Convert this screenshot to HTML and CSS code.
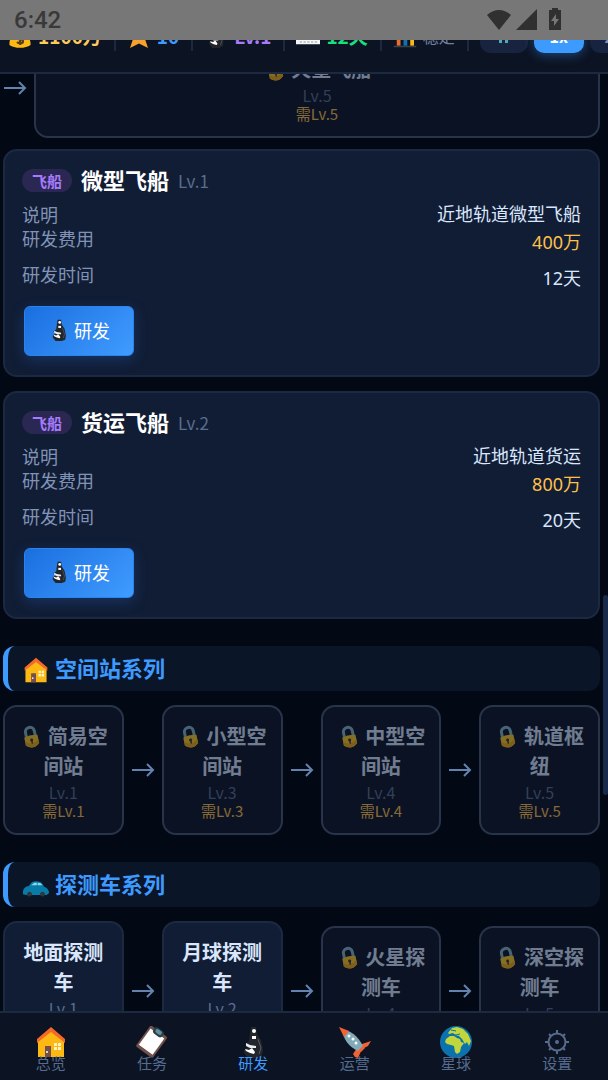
FILE: index.html
```html
<!DOCTYPE html>
<html lang="zh-CN">
<head>
    <meta charset="UTF-8">
    <meta name="viewport" content="width=device-width, initial-scale=1.0">
    <title>研发</title>
    <link rel="stylesheet" href="styles.css">
</head>
<body>
    <!-- Shared icons -->
    <svg class="sprite" aria-hidden="true">
        <symbol id="i-home" viewBox="0 0 32 32">
            <path d="M3 13 16 3l13 10v18H3z" fill="#fdb913"/>
            <path d="M16 1 2 13v4L16 6l14 11v-4z" fill="#f4692a"/>
            <path d="M10 20h6v11h-6z" fill="#75504a"/>
            <circle cx="12" cy="26" r="1" fill="#fff"/>
            <path d="M19 17h3v3h-3zM23 17h3v3h-3zM19 21h3v3h-3zM23 21h3v3h-3z" fill="#fff3c4"/>
        </symbol>
        <symbol id="i-clipboard" viewBox="0 0 32 32">
            <g transform="rotate(36 16 16)">
                <rect x="5" y="3" width="21" height="26" rx="2" fill="#70504b"/>
                <path d="M7 6h17v20H7z" fill="#fff"/>
                <rect x="10" y="1" width="11" height="7" rx="3" fill="#26414c"/>
                <rect x="12" y="2" width="7" height="4" rx="2" fill="#668f9d"/>
            </g>
        </symbol>
        <symbol id="i-scope" viewBox="0 0 32 32">
            <path d="M14 1h5l1 7 4 6 2 10-1 6-5 2h-9l-4-5v-3l4-3-3-3 4-3 1-8z" fill="#22262b"/>
            <circle cx="17" cy="5" r="2" fill="#fff"/>
            <path d="M15 10h4v3h-4z" fill="#fff"/>
            <path d="m9 17 4 2 6 1v2l-6 0-4-2z" fill="#e9edef"/>
            <path d="m8 23 4 1 3-2 3 4-1 2-4-1-4-2z" fill="#fff"/>
            <path d="m21 13 3 9-2 6" fill="none" stroke="#555c63" stroke-width="1"/>
        </symbol>
        <symbol id="i-rocket" viewBox="0 0 32 32">
            <path d="m18 22 5-4 9-3-3 5-6 3-4 9-3-1-2-3z" fill="#f16335"/>
            <path d="M4 4c7 0 15 6 20 16l-5 5C10 21 3 12 4 4z" fill="#82aab9"/>
            <path d="m0 1 10 4-5 6z" fill="#f16335"/>
            <path d="m19 25 5-5 2 2-4 4z" fill="#f16335"/>
            <circle cx="10" cy="10" r="1.500" fill="#fff"/>
            <circle cx="14" cy="13" r="1.500" fill="#fff"/>
            <circle cx="17" cy="17" r="1.500" fill="#fff"/>
        </symbol>
        <symbol id="i-globe" viewBox="0 0 32 32">
            <circle cx="16" cy="16" r="16" fill="#0b72ad"/>
            <path d="M6 13l4-3 4 0 3 2 3 1 1 3 3 1-3 4-1 5-3 2-2-2-1-6-3-1-4-1-2-2z" fill="#c2d63c"/>
            <path d="M8 7l4-5 5-1 6 2 5 5 3 7-2 5-2-4-2 2-3-5-3-3-4-1-2-2-4 1z" fill="#c2d63c"/>
            <path d="m12 8 4 1 4-1M11 4l5 1" stroke="#0b72ad" fill="none"/>
        </symbol>
        <symbol id="i-gear" viewBox="0 0 32 32">
            <circle cx="16" cy="16" r="8.500" fill="none" stroke="currentColor" stroke-width="2"/>
            <circle cx="16" cy="16" r="2" fill="currentColor"/>
            <path d="M16 4v3M16 25v3M4 16h3M25 16h3M8 8l2 2M22 22l2 2M24 8l-2 2M8 24l2-2" stroke="currentColor" stroke-width="2"/>
        </symbol>
        <symbol id="i-lock" viewBox="0 0 32 32">
            <g transform="rotate(-12 16 16)">
                <path d="M10 17V9a6 6 0 0 1 12 0v7" fill="none" stroke="#84b4c4" stroke-width="4"/>
                <path d="M7 15q9-3 18 0v11q-9 8-18 0z" fill="#ffcc22"/>
                <path d="M7 21q9 7 18 0v5q-9 8-18 0z" fill="#f0ac14"/>
                <circle cx="16" cy="20" r="2" fill="#473329"/>
                <path d="M15 20h2v5h-2z" fill="#473329"/>
            </g>
        </symbol>
        <symbol id="i-car" viewBox="0 0 32 32">
            <path d="M0 22q1-5 7-6l4-5q6-2 12 1l3 5q6 2 6 8l-3 2H4l-4-1z" fill="#087ca8"/>
            <path d="m10 15 4-3h3v3zM18 12q4 0 6 3h-6z" fill="#8ed9e8"/>
            <circle cx="8" cy="26" r="3" fill="#30363c"/>
            <circle cx="24" cy="26" r="3" fill="#30363c"/>
        </symbol>
        <symbol id="i-money" viewBox="0 0 32 32">
            <path d="m11 3 10 0-2 7c7 4 12 11 11 18-6 5-22 5-28 0-1-7 4-14 11-18z" fill="#fdb913"/>
            <path d="M12 9h8v2h-8z" fill="#9b6b1c"/>
            <path d="M20 15q-8-3-8 2c0 4 8 2 8 6 0 3-5 4-8 1M16 12v16" fill="none" stroke="#5a3c20" stroke-width="3"/>
        </symbol>
        <symbol id="i-star" viewBox="0 0 32 32">
            <path d="m16 1 5 10 10 2-7 7 4 12-12-6-12 6 4-12-7-7 10-2z" fill="#f9a12b"/>
        </symbol>
        <symbol id="i-calendar" viewBox="0 0 32 32">
            <path d="M0 5h32v22H0z" fill="#f4f6f7"/>
            <path d="M0 5h32v5H0z" fill="#d34a43"/>
            <path d="M5 24h3m2 0h3m2 0h3m2 0h3m2 0h3M4 20h24" stroke="#777e84"/>
        </symbol>
        <symbol id="i-chart" viewBox="0 0 32 32">
            <path d="M5 10h5v19H5z" fill="#ef6b2c"/>
            <path d="M14 3h5v26h-5z" fill="#0d75a9"/>
            <path d="M23 7h5v22h-5z" fill="#fdb913"/>
            <path d="M1 30h30" stroke="#3b4149" stroke-width="2"/>
        </symbol>
    </svg>

    <div class="status-bar">
        <span>6:42</span>
        <div class="status-icons">
            <svg width="26" height="24" viewBox="0 0 26 24"><path d="M1 7Q13-3 25 7L13 22z" fill="#303030"/></svg>
            <svg width="22" height="24" viewBox="0 0 22 24"><path d="M21 1v21H0z" fill="#303030"/></svg>
            <svg width="14" height="24" viewBox="0 0 14 24"><path d="M4 0h6v2h3v20H1V2h3z" fill="#303030"/><path d="M8 6 3 13h3v5l5-7H8z" fill="#777"/></svg>
        </div>
    </div>

    <header class="top-bar">
        <div class="stat gold"><svg class="icon"><use href="#i-money"/></svg>1100万</div>
        <div class="stat blue"><svg class="icon"><use href="#i-star"/></svg>10</div>
        <div class="stat purple"><svg class="icon"><use href="#i-scope"/></svg>Lv.1</div>
        <div class="stat green"><svg class="icon"><use href="#i-calendar"/></svg>12天</div>
        <div class="stat muted"><svg class="icon"><use href="#i-chart"/></svg>稳定</div>
        <div class="speed">
            <button class="speed-btn" aria-label="暂停"><svg width="10" height="12" viewBox="0 0 10 12"><path d="M0 0h3v12H0zM6 0h3v12H6z" fill="#4fa9b8"/></svg></button>
            <button class="speed-btn active">1x</button>
            <button class="speed-btn">2x</button>
        </div>
    </header>

    <main class="content">
        <div class="chain">
            <span class="arrow"><svg width="24" height="14" viewBox="0 0 24 14"><path d="M1 7h21M16 1l6 6-6 6"/></svg></span>
            <div class="node locked">
                <div class="node-name"><svg class="icon"><use href="#i-lock"/></svg> 火星飞船</div>
                <div class="node-level">Lv.5</div>
                <div class="node-req">需Lv.5</div>
            </div>
        </div>

        <section class="card">
            <div class="card-head">
                <span class="tag">飞船</span>
                <h3>微型飞船</h3>
                <span class="level">Lv.1</span>
            </div>
            <dl class="info">
                <div class="info-row desc"><dt>说明</dt><dd>近地轨道微型飞船</dd></div>
                <div class="info-row"><dt>研发费用</dt><dd class="cost">400万</dd></div>
                <div class="info-row"><dt>研发时间</dt><dd>12天</dd></div>
            </dl>
            <button class="btn"><svg class="icon"><use href="#i-scope"/></svg>研发</button>
        </section>

        <section class="card">
            <div class="card-head">
                <span class="tag">飞船</span>
                <h3>货运飞船</h3>
                <span class="level">Lv.2</span>
            </div>
            <dl class="info">
                <div class="info-row desc"><dt>说明</dt><dd>近地轨道货运</dd></div>
                <div class="info-row"><dt>研发费用</dt><dd class="cost">800万</dd></div>
                <div class="info-row"><dt>研发时间</dt><dd>20天</dd></div>
            </dl>
            <button class="btn"><svg class="icon"><use href="#i-scope"/></svg>研发</button>
        </section>

        <h2 class="series"><svg class="icon"><use href="#i-home"/></svg>空间站系列</h2>
        <div class="chain">
            <div class="node locked">
                <div class="node-name"><svg class="icon"><use href="#i-lock"/></svg> 简易空间站</div>
                <div class="node-level">Lv.1</div>
                <div class="node-req">需Lv.1</div>
            </div>
            <span class="arrow"><svg width="24" height="14" viewBox="0 0 24 14"><path d="M1 7h21M16 1l6 6-6 6"/></svg></span>
            <div class="node locked">
                <div class="node-name"><svg class="icon"><use href="#i-lock"/></svg> 小型空间站</div>
                <div class="node-level">Lv.3</div>
                <div class="node-req">需Lv.3</div>
            </div>
            <span class="arrow"><svg width="24" height="14" viewBox="0 0 24 14"><path d="M1 7h21M16 1l6 6-6 6"/></svg></span>
            <div class="node locked">
                <div class="node-name"><svg class="icon"><use href="#i-lock"/></svg> 中型空间站</div>
                <div class="node-level">Lv.4</div>
                <div class="node-req">需Lv.4</div>
            </div>
            <span class="arrow"><svg width="24" height="14" viewBox="0 0 24 14"><path d="M1 7h21M16 1l6 6-6 6"/></svg></span>
            <div class="node locked">
                <div class="node-name"><svg class="icon"><use href="#i-lock"/></svg> 轨道枢纽</div>
                <div class="node-level">Lv.5</div>
                <div class="node-req">需Lv.5</div>
            </div>
        </div>

        <h2 class="series"><svg class="icon"><use href="#i-car"/></svg>探测车系列</h2>
        <div class="chain">
            <div class="node open">
                <div class="node-name">地面探测车</div>
                <div class="node-level">Lv.1</div>
            </div>
            <span class="arrow"><svg width="24" height="14" viewBox="0 0 24 14"><path d="M1 7h21M16 1l6 6-6 6"/></svg></span>
            <div class="node open">
                <div class="node-name">月球探测车</div>
                <div class="node-level">Lv.2</div>
            </div>
            <span class="arrow"><svg width="24" height="14" viewBox="0 0 24 14"><path d="M1 7h21M16 1l6 6-6 6"/></svg></span>
            <div class="node locked">
                <div class="node-name"><svg class="icon"><use href="#i-lock"/></svg> 火星探测车</div>
                <div class="node-level">Lv.4</div>
                <div class="node-req">需Lv.4</div>
            </div>
            <span class="arrow"><svg width="24" height="14" viewBox="0 0 24 14"><path d="M1 7h21M16 1l6 6-6 6"/></svg></span>
            <div class="node locked">
                <div class="node-name"><svg class="icon"><use href="#i-lock"/></svg> 深空探测车</div>
                <div class="node-level">Lv.5</div>
                <div class="node-req">需Lv.5</div>
            </div>
        </div>
    </main>

    <div class="scroll-thumb"></div>

    <nav class="bottom-nav">
        <a href="#overview"><svg class="icon"><use href="#i-home"/></svg><span>总览</span></a>
        <a href="#tasks"><svg class="icon"><use href="#i-clipboard"/></svg><span>任务</span></a>
        <a href="#research" class="active"><svg class="icon"><use href="#i-scope"/></svg><span>研发</span></a>
        <a href="#operate"><svg class="icon"><use href="#i-rocket"/></svg><span>运营</span></a>
        <a href="#planets"><svg class="icon"><use href="#i-globe"/></svg><span>星球</span></a>
        <a href="#settings"><svg class="icon"><use href="#i-gear"/></svg><span>设置</span></a>
    </nav>
</body>
</html>
```
FILE: styles.css
```css
* {
    margin: 0;
    padding: 0;
    box-sizing: border-box;
}

body {
    height: 100vh;
    overflow: hidden;
    background-color: #030914;
    color: #d9e6fc;
    font-family: 'Noto Sans CJK SC', sans-serif;
    font-size: 18px;
}

button {
    font-family: inherit;
    border: none;
    cursor: pointer;
}

.sprite {
    position: absolute;
    width: 0;
    height: 0;
}

.icon {
    width: 24px;
    height: 24px;
    flex: none;
}

/* Status bar */
.status-bar {
    position: fixed;
    top: 0;
    left: 0;
    right: 0;
    z-index: 20;
    height: 40px;
    padding: 0 46px 0 14px;
    display: flex;
    align-items: center;
    justify-content: space-between;
    background-color: #777;
    color: #393939;
    font: 500 24px 'Roboto', sans-serif;
}

.status-icons {
    display: flex;
    gap: 4px;
}

.status-icons svg:last-child {
    margin-left: 6px;
}

/* Resource bar */
.top-bar {
    position: fixed;
    top: 0;
    left: 0;
    right: 0;
    z-index: 10;
    height: 74px;
    padding-left: 8px;
    display: flex;
    align-items: center;
    overflow: hidden;
    background-color: #0c1323;
    border-bottom: 2px solid #1b2941;
}

.stat {
    flex: none;
    display: flex;
    align-items: center;
    gap: 6px;
    height: 30px;
    padding-right: 12px;
    margin-right: 11px;
    border-right: 2px solid #1b2941;
    font-size: 19px;
    font-weight: 700;
    line-height: 30px;
}

.gold { color: #ffc95c; }
.blue { color: #3d9bff; }
.purple { color: #a77bfa; }
.green { color: #18e07c; }

.muted {
    color: #7080a0;
    font-size: 16px;
    font-weight: 400;
}

.speed {
    flex: none;
    display: flex;
    gap: 6px;
}

.speed-btn {
    width: 48px;
    height: 34px;
    border-radius: 10px;
    background-color: #17233f;
    color: #7e91b3;
    font-size: 16px;
    font-weight: 700;
}

.speed-btn.active {
    width: 50px;
    background-color: #3d9bff;
    color: #fff;
    box-shadow: 0 2px 12px rgba(61, 155, 255, 0.4);
}

/* Content */
.content {
    padding: 38px 8px 0 3px;
}

.chain {
    display: flex;
    align-items: center;
}

.node {
    flex: 1;
    min-width: 0;
    padding: 14px 12px;
    border: 2px solid #1b2941;
    border-radius: 14px;
    background-color: #111d35;
    text-align: center;
}

.node-name {
    font-size: 20px;
    font-weight: 700;
    line-height: 30px;
}

.node-name .icon {
    vertical-align: -5px;
}

.node-level {
    color: #5a6d8c;
    font-size: 16px;
    line-height: 22px;
}

.node-req {
    color: #ffc04a;
    font-size: 15px;
    line-height: 16px;
}

.node.locked {
    background-color: #0a1224;
    border-color: #27344a;
}

.locked .node-name,
.locked .node-level,
.locked .node-req {
    opacity: 0.5;
}

.node.open {
    padding-bottom: 39px;
}

.arrow {
    flex: none;
    width: 38px;
    display: flex;
    justify-content: center;
}

.arrow:first-child {
    width: 31px;
    justify-content: flex-start;
}

.arrow path {
    fill: none;
    stroke: #6482ae;
    stroke-width: 2;
}

.card {
    margin-top: 14px;
    padding: 17px 17px 19px;
    border: 2px solid #1b2941;
    border-radius: 14px;
    background-color: #111d35;
}

.chain + .card {
    margin-top: 11px;
}

.card-head {
    display: flex;
    align-items: center;
    gap: 9px;
    height: 24px;
    margin-bottom: 10px;
}

.tag {
    padding: 0 10px;
    border-radius: 12px;
    background-color: #2a2852;
    color: #a77bfa;
    font-size: 15px;
    font-weight: 700;
    line-height: 23px;
}

.card-head h3 {
    color: #fff;
    font-size: 22px;
    line-height: 24px;
    padding-bottom: 2px;
}

.level {
    color: #5a6d8c;
    font-size: 17px;
}

.info-row {
    display: flex;
    justify-content: space-between;
    margin-bottom: 4px;
    line-height: 32px;
}

.info-row dt {
    color: #8093b6;
    line-height: 24px;
}

.info-row dd {
    font-family: 'Noto Sans', 'Noto Sans CJK SC', sans-serif;
}

.info-row.desc {
    margin-bottom: 0;
    line-height: 24px;
}

.info-row .cost {
    color: #ffc04a;
}

.btn {
    display: flex;
    align-items: center;
    justify-content: center;
    gap: 4px;
    width: 110px;
    height: 50px;
    margin: 12px 2px 0;
    padding-bottom: 3px;
    border: 1px solid #2b83ee;
    border-radius: 6px;
    background: linear-gradient(135deg, #1a6fdf, #409cff);
    color: #fff;
    font-size: 18px;
    box-shadow: 0 4px 14px rgba(40, 120, 240, 0.25);
}

.btn .icon {
    width: 22px;
    height: 22px;
}

.series {
    display: flex;
    align-items: center;
    gap: 6px;
    height: 45px;
    margin: 27px 0 14px;
    padding: 0 0 3px 15px;
    border-left: 5px solid #3d9bff;
    border-radius: 12px;
    background-color: #0b1528;
    color: #3d9bff;
    font-size: 22px;
}

.series .icon {
    width: 26px;
    height: 26px;
    margin-top: 5px;
}

.scroll-thumb {
    position: fixed;
    right: 0;
    top: 595px;
    width: 5px;
    height: 200px;
    border-radius: 3px;
    background-color: #172a4c;
}

/* Bottom navigation */
.bottom-nav {
    position: fixed;
    left: 0;
    right: 0;
    bottom: 0;
    display: flex;
    padding: 13px 0 8px;
    background-color: #0c1323;
    border-top: 2px solid #1b2941;
}

.bottom-nav a {
    flex: 1;
    display: flex;
    flex-direction: column;
    align-items: center;
    color: #566b8d;
    font-size: 15px;
    line-height: 18px;
    text-decoration: none;
}

.bottom-nav .icon {
    width: 32px;
    height: 32px;
    margin-bottom: -4px;
}

.bottom-nav .active {
    color: #3d9bff;
}
```
